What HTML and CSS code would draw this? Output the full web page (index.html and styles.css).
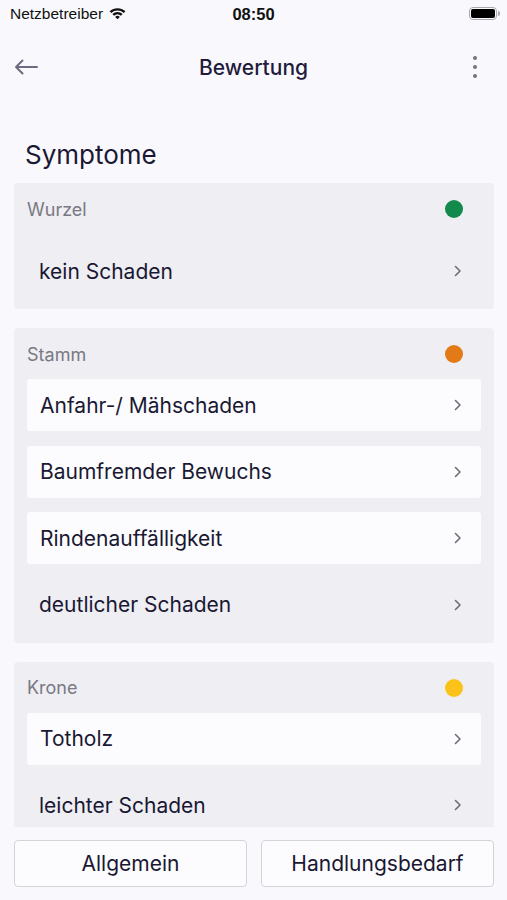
FILE: index.html
```html
<!DOCTYPE html>
<html lang="de">
<head>
    <meta charset="UTF-8">
    <meta name="viewport" content="width=device-width, initial-scale=1.0">
    <title>Bewertung</title>
    <link rel="stylesheet" href="styles.css">
</head>
<body>
    <div class="status-bar">
        <div class="carrier">
            <span>Netzbetreiber</span>
            <svg class="wifi" width="17" height="13" viewBox="0 0 17 13">
                <path d="M0.6 4.3 A11.5 11.5 0 0 1 16.4 4.3 L14.7 6 A9 9 0 0 0 2.3 6 Z" fill="#111"/>
                <path d="M3.4 7.1 A7.4 7.4 0 0 1 13.6 7.1 L11.9 8.8 A5 5 0 0 0 5.1 8.8 Z" fill="#111"/>
                <path d="M6.2 9.9 A3.4 3.4 0 0 1 10.8 9.9 L8.5 12.3 Z" fill="#111"/>
            </svg>
        </div>
        <span class="time">08:50</span>
        <div class="battery">
            <span class="battery-body"><span class="battery-level"></span></span>
            <span class="battery-cap"></span>
        </div>
    </div>

    <header class="navbar">
        <button class="nav-icon" aria-label="Zurück">
            <svg width="24" height="16" viewBox="0 0 24 16">
                <path d="M23 8 H2 M8.5 1.5 L2 8 L8.5 14.5" fill="none" stroke="#6e6b80" stroke-width="2" stroke-linecap="round" stroke-linejoin="round"/>
            </svg>
        </button>
        <h1 class="nav-title">Bewertung</h1>
        <button class="nav-icon more" aria-label="Mehr">
            <span class="dot"></span><span class="dot"></span><span class="dot"></span>
        </button>
    </header>

    <main class="content">
        <h2 class="section-title">Symptome</h2>

        <section class="group">
            <div class="group-head">
                <span>Wurzel</span>
                <span class="status status-green"></span>
            </div>
            <div class="rows">
                <a class="row row-plain row-single">
                    <span>kein Schaden</span>
                    <svg class="chevron" width="8" height="12" viewBox="0 0 8 12"><path d="M1.5 1.5 L6 6 L1.5 10.5" /></svg>
                </a>
            </div>
        </section>

        <section class="group">
            <div class="group-head">
                <span>Stamm</span>
                <span class="status status-orange"></span>
            </div>
            <div class="rows">
                <a class="row">
                    <span>Anfahr-/ Mähschaden</span>
                    <svg class="chevron" width="8" height="12" viewBox="0 0 8 12"><path d="M1.5 1.5 L6 6 L1.5 10.5" /></svg>
                </a>
                <a class="row">
                    <span>Baumfremder Bewuchs</span>
                    <svg class="chevron" width="8" height="12" viewBox="0 0 8 12"><path d="M1.5 1.5 L6 6 L1.5 10.5" /></svg>
                </a>
                <a class="row">
                    <span>Rindenauffälligkeit</span>
                    <svg class="chevron" width="8" height="12" viewBox="0 0 8 12"><path d="M1.5 1.5 L6 6 L1.5 10.5" /></svg>
                </a>
                <a class="row row-plain">
                    <span>deutlicher Schaden</span>
                    <svg class="chevron" width="8" height="12" viewBox="0 0 8 12"><path d="M1.5 1.5 L6 6 L1.5 10.5" /></svg>
                </a>
            </div>
        </section>

        <section class="group">
            <div class="group-head">
                <span>Krone</span>
                <span class="status status-yellow"></span>
            </div>
            <div class="rows">
                <a class="row">
                    <span>Totholz</span>
                    <svg class="chevron" width="8" height="12" viewBox="0 0 8 12"><path d="M1.5 1.5 L6 6 L1.5 10.5" /></svg>
                </a>
                <a class="row row-plain">
                    <span>leichter Schaden</span>
                    <svg class="chevron" width="8" height="12" viewBox="0 0 8 12"><path d="M1.5 1.5 L6 6 L1.5 10.5" /></svg>
                </a>
            </div>
        </section>
    </main>

    <footer class="bottom-bar">
        <button class="tab-button">Allgemein</button>
        <button class="tab-button">Handlungsbedarf</button>
    </footer>
</body>
</html>
```

FILE: styles.css
```css
* {
    box-sizing: border-box;
}
body {
    font-family: Inter, "Noto Sans", sans-serif;
    margin: 0;
    padding: 0;
    height: 900px;
    display: flex;
    flex-direction: column;
    background-color: #f9f9fd;
    color: #1a1833;
    overflow: hidden;
}

/* status bar */
.status-bar {
    height: 28px;
    display: flex;
    align-items: center;
    justify-content: space-between;
    padding: 0 7px 0 10px;
    position: relative;
    font-family: "Liberation Sans", Arial, sans-serif;
    color: #111;
}
.carrier {
    display: flex;
    align-items: center;
    gap: 6px;
    font-size: 15.5px;
}
.wifi {
    margin-top: -2px;
}
.time {
    position: absolute;
    left: 0;
    right: 0;
    text-align: center;
    font-size: 16.5px;
    font-weight: bold;
    pointer-events: none;
}
.battery {
    display: flex;
    align-items: center;
    margin-top: -1px;
}
.battery-body {
    width: 28px;
    height: 13px;
    border: 1.5px solid #a9a9ad;
    border-radius: 4px;
    padding: 1px;
    display: flex;
}
.battery-level {
    flex: 1;
    background: #000;
    border-radius: 2px;
}
.battery-cap {
    width: 2px;
    height: 5px;
    background: #a9a9ad;
    border-radius: 0 2px 2px 0;
    margin-left: 1px;
}

/* navigation */
.navbar {
    height: 54px;
    margin-top: 12px;
    display: grid;
    grid-template-columns: 1fr auto 1fr;
    align-items: center;
    padding: 0 26px 0 14px;
}
.nav-title {
    margin: 0 0 0 12px;
    font-size: 21px;
    font-weight: 500;
    color: #1f1c3c;
}
.nav-icon {
    width: 26px;
    height: 30px;
    border: none;
    background: none;
    padding: 0;
    display: flex;
    align-items: center;
    justify-content: flex-start;
    cursor: pointer;
}
.more {
    justify-self: end;
    flex-direction: column;
    justify-content: center;
    align-items: flex-end;
    gap: 5px;
    padding-right: 4px;
}
.dot {
    width: 4px;
    height: 4px;
    border-radius: 50%;
    background: #75737f;
}

/* content */
.content {
    flex: 1;
    overflow: hidden;
    padding: 0 13px 0 14px;
}
.section-title {
    margin: 46px 0 13px 11px;
    font-size: 26px;
    line-height: 30px;
    font-weight: 400;
}
.group {
    background: #eeeef3;
    border-radius: 4px;
    padding: 15px 13px 12px 13px;
    margin-bottom: 19px;
}
.group-head {
    height: 22px;
    display: flex;
    align-items: center;
    justify-content: space-between;
    padding: 0 22px 0 0;
    font-size: 18px;
    color: #7a7984;
}
.status {
    width: 18px;
    height: 18px;
    border-radius: 50%;
    margin-right: -4px;
}
.status-green {
    background: #128a4c;
}
.status-orange {
    background: #e27b17;
}
.status-yellow {
    background: #fbc319;
}
.rows {
    display: flex;
    flex-direction: column;
    gap: 14.5px;
    margin-top: 14px;
}
.row {
    height: 52px;
    display: flex;
    align-items: center;
    justify-content: space-between;
    padding: 0 20px 0 13px;
    background: #fcfcfe;
    border-radius: 3px;
    font-size: 21px;
    color: #1a1833;
    text-decoration: none;
}
.row-plain {
    background: none;
    padding-left: 12px;
}
.row-single {
    margin-top: 11px;
}
.chevron {
    margin-right: -1px;
}
.chevron path {
    fill: none;
    stroke: #6e6d78;
    stroke-width: 1.6;
    stroke-linecap: round;
    stroke-linejoin: round;
}

/* bottom buttons */
.bottom-bar {
    display: flex;
    gap: 14px;
    padding: 13px 13px 13px 14px;
    background: #f9f9fd;
}
.tab-button {
    flex: 1;
    height: 47px;
    background: #fcfcfe;
    border: 1px solid #d3d3da;
    border-radius: 4px;
    font-family: inherit;
    font-size: 21px;
    color: #1a1833;
    cursor: pointer;
}
```
